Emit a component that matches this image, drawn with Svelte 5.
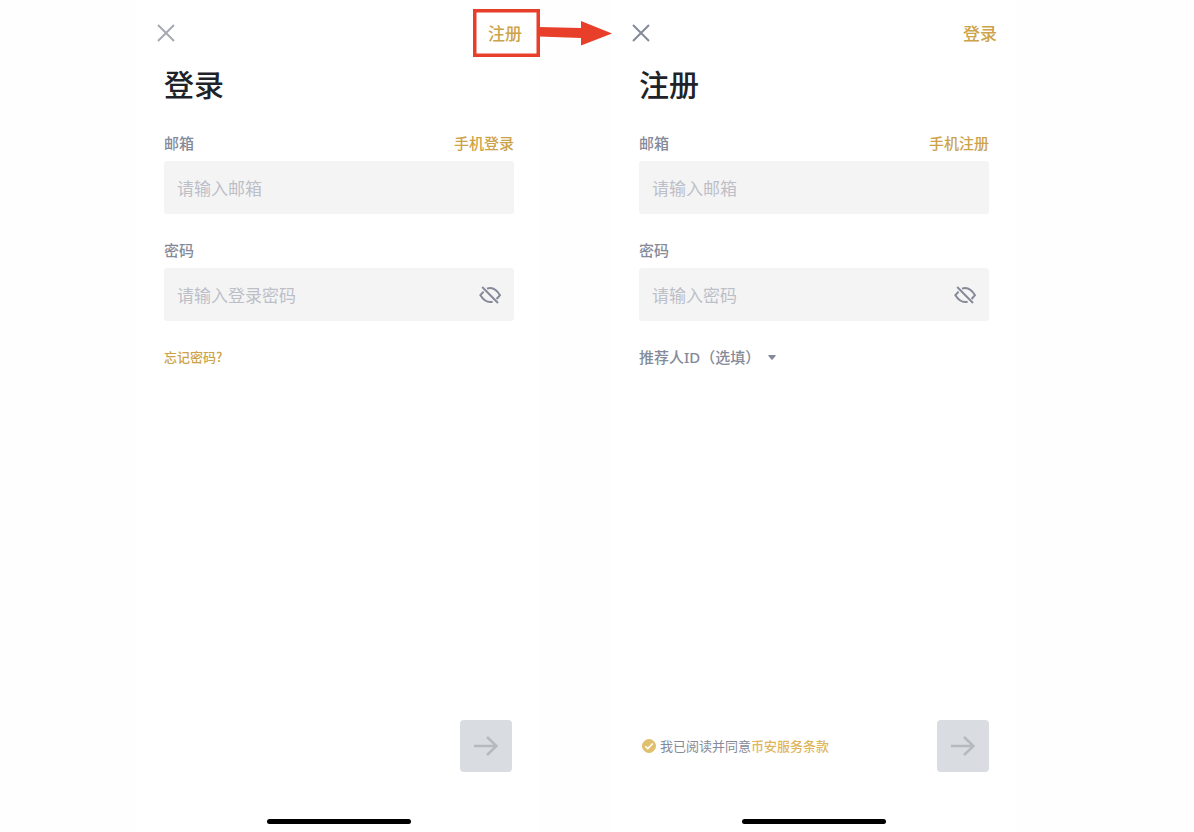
<script lang="ts">
  let agreed = $state(true);
  let email = $state({ login: '', register: '' });
  let password = $state({ login: '', register: '' });

  const screens = [
    {
      id: 'login',
      title: '登录',
      other: '注册',
      phone: '手机登录',
      hint: '请输入登录密码',
      highlighted: true,
    },
    {
      id: 'register',
      title: '注册',
      other: '登录',
      phone: '手机注册',
      hint: '请输入密码',
      highlighted: false,
    },
  ] as const;
</script>

<main class="page">
  {#each screens as s (s.id)}
    <section class="screen {s.id}">
      <header class="bar">
        <button class="close" type="button" aria-label="关闭">
          <svg viewBox="0 0 24 24" width="24" height="24" fill="none" stroke="currentColor" stroke-width="2">
            <path d="M4 4L20 20M20 4L4 20" />
          </svg>
        </button>
        <div class="switch">
          <a class="switch-link" href="#{s.id}">{s.other}</a>
          {#if s.highlighted}
            <svg class="callout" viewBox="0 0 140 48" width="140" height="48" aria-hidden="true">
              <rect x="1.75" y="1.75" width="63.5" height="44.5" fill="none" stroke="#e83f2b" stroke-width="3.5" />
              <path d="M66 18L108 19V12L139 24.5L108 36.5V29L66 27.5Z" fill="#e83f2b" />
            </svg>
          {/if}
        </div>
      </header>

      <form class="form" onsubmit={(e) => e.preventDefault()}>
        <h1>{s.title}</h1>

        <div class="label-row">
          <label for="{s.id}-email">邮箱</label>
          <a href="#{s.id}-phone">{s.phone}</a>
        </div>
        <div class="field">
          <input id="{s.id}-email" type="email" placeholder="请输入邮箱" bind:value={email[s.id]} />
        </div>

        <div class="label-row">
          <label for="{s.id}-password">密码</label>
        </div>
        <div class="field">
          <input id="{s.id}-password" type="password" placeholder={s.hint} bind:value={password[s.id]} />
          <button class="eye" type="button" aria-label="显示密码">
            <svg viewBox="0 0 24 24" width="24" height="24" fill="none" stroke="currentColor" stroke-width="2">
              <path d="M4.2 4L20 20" />
              <path d="M9 5.6C14 3.8 18.4 6.2 22 12.2L18.6 16" />
              <path d="M5.6 8.6L2.4 12.2C5.6 17.4 9.6 19.8 14.6 18.7" />
            </svg>
          </button>
        </div>

        {#if s.id === 'login'}
          <div class="extra"><a class="forgot" href="#forgot">忘记密码?</a></div>
        {:else}
          <div class="extra">
            <button class="referral" type="button">
              推荐人ID（选填）
              <svg viewBox="0 0 8 5" width="8" height="5" aria-hidden="true">
                <path d="M0.8 0H7.2Q8.2 0.4 7.4 1.3L4.6 4.5Q4 5 3.4 4.5L0.6 1.3Q-0.2 0.4 0.8 0Z" fill="currentColor" />
              </svg>
            </button>
          </div>
        {/if}

        <div class="actions">
          {#if s.id === 'register'}
            <div class="terms">
              <span class="tick">
                <input id="agree" type="checkbox" bind:checked={agreed} />
                {#if agreed}
                  <svg viewBox="0 0 14 14" width="14" height="14" fill="none" stroke="#fff" stroke-width="1.5" aria-hidden="true">
                    <path d="M3.2 7.2L5.8 9.6L10.8 4.4" />
                  </svg>
                {/if}
              </span>
              <p><label for="agree">我已阅读并同意</label><a href="#terms">币安服务条款</a></p>
            </div>
          {/if}
          <button class="next" type="submit" aria-label="下一步">
            <svg viewBox="0 0 24 20" width="24" height="20" fill="none" stroke="currentColor" stroke-width="2.5">
              <path d="M0 10H22.5M13 1L22.5 10L13 19" />
            </svg>
          </button>
        </div>

        <div class="home"></div>
      </form>
    </section>
  {/each}
</main>

<style>
  :global(body) {
    margin: 0;
    background: #fefefe;
  }
  .page {
    display: grid;
    grid-template-columns: 136fr 404fr 71fr 404fr 179fr;
    min-height: 100vh;
    font-family: 'Noto Sans CJK SC', sans-serif;
    font-size: 15px;
    line-height: 22px;
    color: #858a99;
  }
  .screen {
    display: flex;
    flex-direction: column;
    box-sizing: border-box;
    min-width: 0;
    padding: 13px 0 8px;
    background: #fff;
  }
  .login {
    grid-column: 2;
  }
  .register {
    grid-column: 4;
  }
  button {
    padding: 0;
    border: 0;
    background: none;
    font: inherit;
    color: inherit;
    cursor: pointer;
  }
  svg {
    display: block;
  }
  a {
    color: #cda349;
    font-weight: 500;
    text-decoration: none;
  }
  .bar {
    display: flex;
    align-items: center;
    justify-content: space-between;
    height: 40px;
    padding: 0 18px;
  }
  .close {
    color: #858a99;
  }
  .login .close {
    color: #a6a9b4;
  }
  .switch {
    position: relative;
  }
  .switch-link {
    display: block;
    font-size: 17px;
    line-height: 24px;
  }
  .callout {
    position: absolute;
    top: -12px;
    left: -15px;
    z-index: 1;
    pointer-events: none;
  }
  .form {
    display: flex;
    flex: 1;
    flex-direction: column;
    padding: 0 26px 0 28px;
  }
  h1 {
    margin: 10px 0 29px;
    font-size: 30px;
    font-weight: 500;
    line-height: 40px;
    color: #1e2329;
  }
  .label-row {
    display: flex;
    justify-content: space-between;
    margin-bottom: 7px;
    font-weight: 500;
  }
  .field {
    display: flex;
    align-items: center;
    height: 53px;
    margin-bottom: 25px;
    padding: 0 12px 0 13px;
    border-radius: 3px;
    background: #f4f4f4;
  }
  .field input {
    flex: 1;
    min-width: 0;
    padding: 0;
    border: 0;
    outline: 0;
    background: none;
    font: inherit;
    font-size: 17px;
    line-height: 26px;
    color: #1e2329;
  }
  .field input::placeholder {
    color: #bdbfc8;
    opacity: 1;
  }
  .extra {
    display: flex;
  }
  .forgot {
    font-size: 13px;
  }
  .referral {
    display: flex;
    align-items: center;
    gap: 8px;
    font-family: 'Noto Sans', 'Noto Sans CJK SC', sans-serif;
    font-weight: 500;
  }
  .actions {
    display: flex;
    align-items: center;
    justify-content: flex-end;
    margin-top: auto;
    margin-bottom: 47px;
  }
  .login .actions {
    padding-right: 2px;
  }
  .terms {
    display: flex;
    align-items: center;
    gap: 4px;
    margin: 0 auto 0 3px;
    font-size: 13px;
  }
  .terms p {
    margin: 0;
  }
  .tick {
    display: grid;
  }
  .tick > * {
    grid-area: 1 / 1;
  }
  .tick input {
    width: 14px;
    height: 14px;
    margin: 0;
    border: 1px solid #e0c06c;
    border-radius: 50%;
    appearance: none;
  }
  .tick input:checked {
    background: #e0c06c;
  }
  .tick svg {
    pointer-events: none;
  }
  .terms a {
    color: #dfb65c;
  }
  .next {
    display: grid;
    place-items: center;
    width: 52px;
    height: 52px;
    border-radius: 4px;
    background: #d9dce1;
    color: #b6b9be;
  }
  .home {
    align-self: center;
    width: 41%;
    height: 5px;
    border-radius: 3px;
    background: #000;
  }
</style>
